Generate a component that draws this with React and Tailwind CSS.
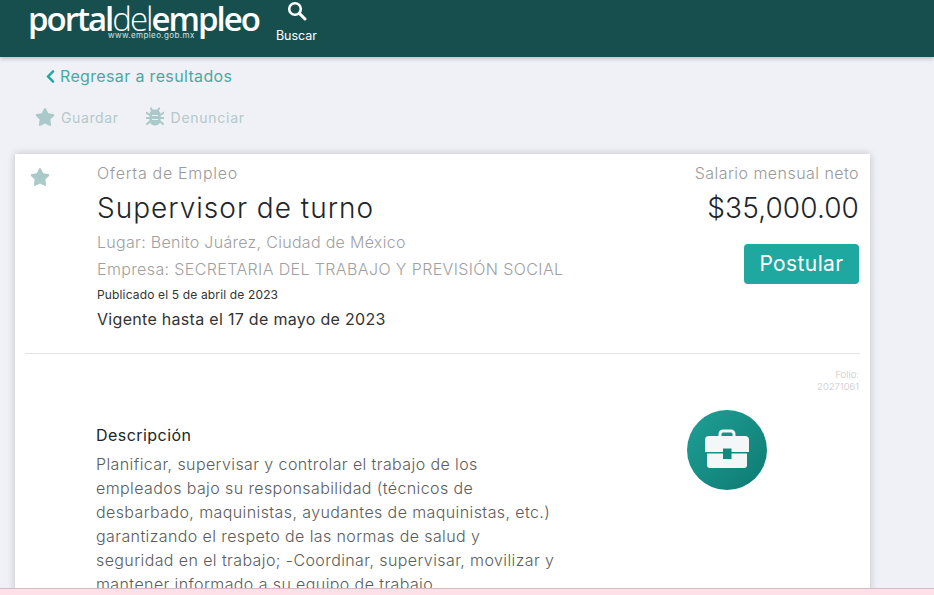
import React from "react";
import { FaChevronLeft, FaStar } from "react-icons/fa";

const descripcion = [
  "Planificar, supervisar y controlar el trabajo de los",
  "empleados bajo su responsabilidad (técnicos de",
  "desbarbado, maquinistas, ayudantes de maquinistas, etc.)",
  "garantizando el respeto de las normas de salud y",
  "seguridad en el trabajo; -Coordinar, supervisar, movilizar y",
  "mantener informado a su equipo de trabajo.",
];

const IconoBuscar = () => (
  <svg width="20" height="20" viewBox="0 0 20 20" fill="none" stroke="currentColor">
    <circle cx="8" cy="8" r="5.8" strokeWidth="2.6" />
    <path d="M12.4 12.4 18 18" strokeWidth="3" strokeLinecap="round" />
  </svg>
);

const IconoDenuncia = () => (
  <svg width="18" height="20" viewBox="0 0 18 20" fill="none">
    <path
      d="M0 5.5 4 8M18 5.5 14 8M0 11h4M18 11h-4M1 17l3.500-3M17 17l-3.500-3M6 3.500 5 1.500M12 3.500l1-2"
      stroke="#a9cac8"
      strokeWidth="2"
      strokeLinecap="round"
    />
    <rect x="3.500" y="2.500" width="11" height="16" rx="5" fill="#a9cac8" />
    <path d="M6 8.500h6M6 12.500h6" stroke="#eff1f6" strokeWidth="1.200" />
  </svg>
);

const IconoMaletin = () => (
  <svg width="44" height="40" viewBox="0 0 44 40">
    <path d="M15 8V5a3 3 0 0 1 3-3h8a3 3 0 0 1 3 3v3" fill="none" stroke="#f4f7f7" strokeWidth="3" />
    <path d="M4 7h36a4 4 0 0 1 4 4v12H0V11a4 4 0 0 1 4-4z" fill="#f4f7f7" />
    <path d="M2 24.500h40V36a3 3 0 0 1-3 3H5a3 3 0 0 1-3-3z" fill="#f4f7f7" />
    <rect x="18" y="19.500" width="8.500" height="10.500" fill="#14877f" />
  </svg>
);

const App = () => {
  return (
    <div className="flex h-[595px] w-[934px] flex-col overflow-hidden bg-[#eff1f6] font-['Inter',sans-serif]">
      {/* Header */}
      <div className="z-10 flex h-[57px] shrink-0 bg-[#174f4f] pl-[28px] shadow-[0_2px_4px_rgba(0,0,0,0.2)]">
        <div className="w-[232px] text-white">
          <div className="mt-[6px] h-[26px] whitespace-nowrap font-['Open_Sans',sans-serif] text-[33px] leading-[26px] font-semibold tracking-[-2px]">
            portal<span className="font-light">del</span>empleo
          </div>
          <div className="mt-[-2px] ml-[80px] w-fit text-[8px] leading-[10px] tracking-[0.4px] text-[#d5e0e0]">
            www.empleo.gob.mx
          </div>
        </div>
        <div className="ml-[16px] flex w-[41px] flex-col items-center pt-[1px] text-white">
          <IconoBuscar />
          <span className="mt-[7px] text-[12.5px] leading-[15px]">Buscar</span>
        </div>
      </div>

      {/* Contenido */}
      <div className="min-h-0 flex-1 overflow-hidden pl-[15px]">
        <div className="mt-[9px] ml-[30px] flex items-center gap-[4px] text-[#4ba8a0]">
          <FaChevronLeft className="w-[11px] text-[15px] text-[#1fa8a0]" />
          <span className="text-[16px] leading-[20px] tracking-[0.35px]">Regresar a resultados</span>
        </div>
        <div className="mt-[21px] ml-[20px] flex h-[20px] items-center text-[14px] text-[#b4c9c9]">
          <FaStar className="text-[20px] text-[#a9cac8]" />
          <span className="ml-[6px] tracking-[0.6px]">Guardar</span>
          <div className="ml-[27px]">
            <IconoDenuncia />
          </div>
          <span className="ml-[7px] tracking-[0.75px]">Denunciar</span>
        </div>

        <div className="mt-[27px] w-[855px] bg-white pb-[60px] shadow-[0_0_8px_rgba(0,0,0,0.2)]">
          <div className="flex justify-between pr-[11px] pb-[24px]">
            <div className="flex">
              <FaStar className="mt-[13px] ml-[15px] text-[20px] text-[#a9cac8]" />
              <div className="ml-[47px] pt-[10px]">
                <div className="text-[16px] leading-[18px] font-light tracking-[0.7px] text-[#9a9a9a]">
                  Oferta de Empleo
                </div>
                <h1 className="mt-[9px] text-[28px] leading-[34px] font-light tracking-[1px] text-[#212529]">
                  Supervisor de turno
                </h1>
                <div className="mt-[8px] text-[16px] leading-[18px] font-light tracking-[0.3px] text-[#a0a0a0]">
                  Lugar: Benito Juárez, Ciudad de México
                </div>
                <div className="mt-[9px] text-[16px] leading-[18px] font-light tracking-[0.38px] text-[#a0a0a0]">
                  Empresa: SECRETARIA DEL TRABAJO Y PREVISIÓN SOCIAL
                </div>
                <div className="mt-[10px] text-[12px] leading-[14px] tracking-[0.15px] text-[#333]">
                  Publicado el 5 de abril de 2023
                </div>
                <div className="mt-[7px] text-[16px] leading-[20px] tracking-[0.3px] text-[#333]">
                  Vigente hasta el 17 de mayo de 2023
                </div>
              </div>
            </div>
            <div className="flex flex-col items-end pt-[10px]">
              <div className="text-[16px] leading-[18px] font-light tracking-[0.45px] text-[#9a9a9a]">
                Salario mensual neto
              </div>
              <div className="mt-[9px] text-[28px] leading-[34px] font-light tracking-[0.1px] text-[#212529]">
                $35,000.00
              </div>
              <button className="mt-[19px] h-[40px] w-[115px] rounded-[4px] bg-[#1fa8a0] text-[21px] font-normal tracking-[0.4px] text-white">
                Postular
              </button>
            </div>
          </div>

          <div className="mx-[10px] h-px bg-[#e4e4e4]" />

          <div className="mt-[15px] pr-[11px] text-right text-[9.5px] leading-[12px] font-light text-[#c8c8c8]">
            <div>Folio:</div>
            <div>20271061</div>
          </div>

          <div className="flex">
            <div className="ml-[81px] w-[500px] pt-[32px]">
              <h2 className="text-[16px] leading-[20px] font-normal tracking-[0.45px] text-[#212529]">Descripción</h2>
              <div className="mt-[7px] text-[16px] leading-[24px] font-light tracking-[0.4px] whitespace-nowrap text-[#5c5c5c]">
                {descripcion.map((linea) => (
                  <div key={linea}>{linea}</div>
                ))}
              </div>
            </div>
            <div className="mt-[17px] ml-[91px] flex h-[80px] w-[80px] items-center justify-center rounded-full bg-gradient-to-br from-[#1fa096] to-[#0d7a72] pb-[2px]">
              <IconoMaletin />
            </div>
          </div>
        </div>
      </div>

      {/* Franja inferior */}
      <div className="z-10 h-[7px] shrink-0 border-t border-[#d9b9c2] bg-[#fde0e8]" />
    </div>
  );
};

export default App;
